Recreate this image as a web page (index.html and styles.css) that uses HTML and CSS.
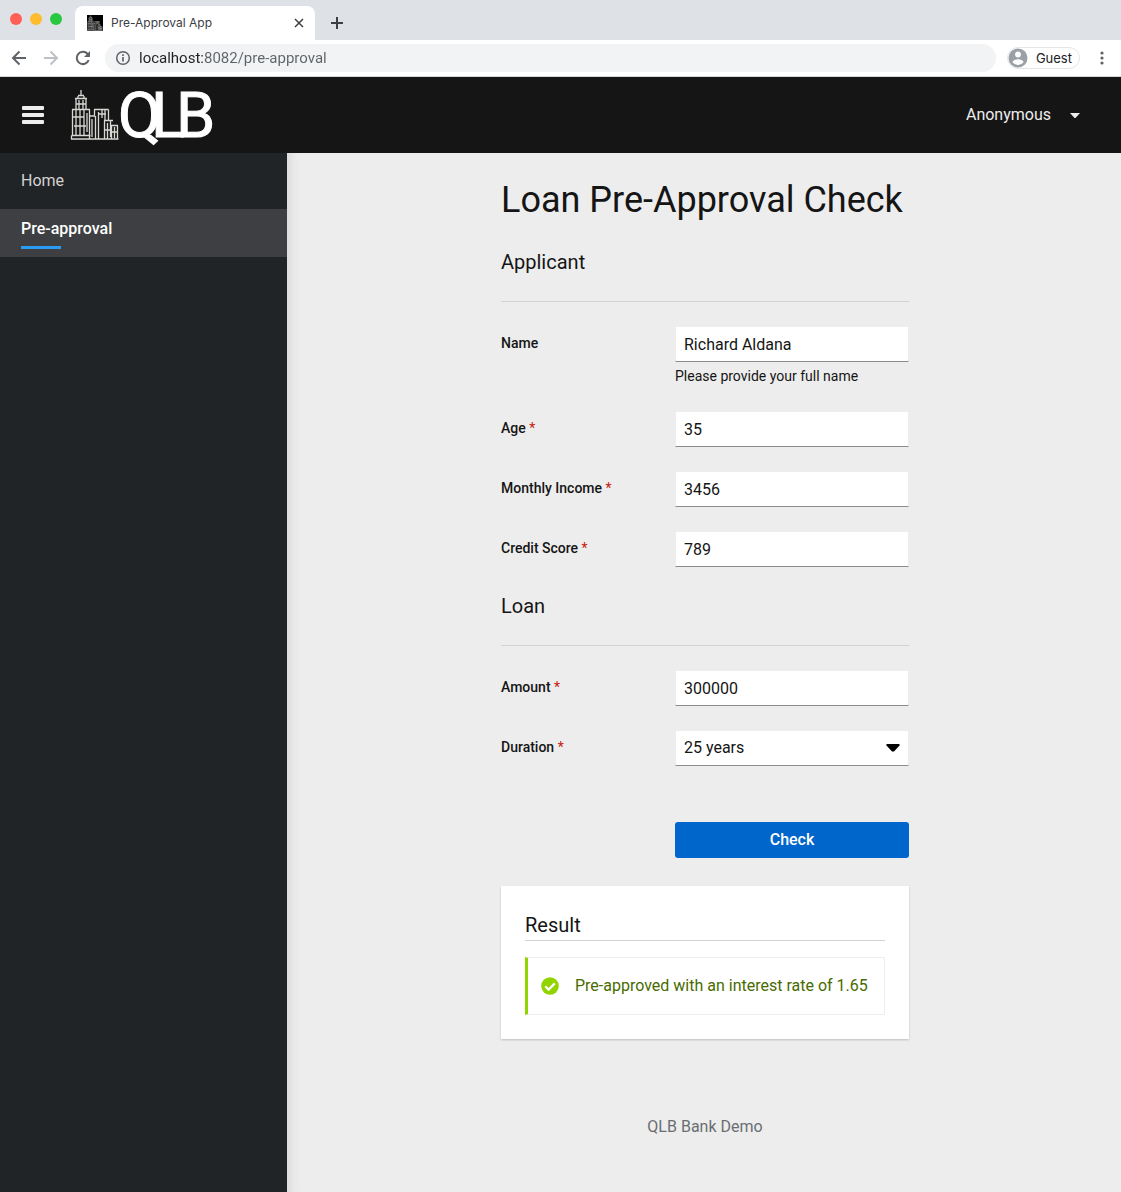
FILE: index.html
```html
<!DOCTYPE html>
<html lang="en">
<head>
<meta charset="utf-8">
<meta name="viewport" content="width=device-width, initial-scale=1">
<title>Pre-Approval App</title>
<link rel="stylesheet" href="styles.css">
</head>
<body>
<svg class="defs" aria-hidden="true">
  <defs>
    <symbol id="skyline" viewBox="70 89 50 51">
      <path d="M81 90v5M78 95.500h6M78 96v2.500M84 96v2.500M75 98.500h12M76 98.500v10.500M86 98.500v10.500M79 100v9M83 100v9M76 104h10M72 109.500h18M72.500 109.500v26M89.500 109.500v29M76 110v25M80 110v25M84 110v25M87 113v19M72 117h12M74 126h12M71.500 135.500h19M71.500 135.500v4M71 139h47.500M90 116h5M95.500 116v23M92 119v18M94 109.500h14.500M94.500 109.500v7M108.500 109.500v11M98.500 112v27M102 110v8M105 110v10M98 114h8M104 120.500h9M104.500 120.500v19M107.500 123v16M110.500 120v17M104 130h6M111 125.500h7M111.500 125.500v14M117.500 125.500v14M114.500 127v11M111 132h6" fill="none" stroke="#d8d8d4" stroke-width="1.300"/>
    </symbol>
  </defs>
</svg>

<div class="browser">
  <div class="tabstrip">
    <div class="lights"><i class="light red"></i><i class="light amber"></i><i class="light green"></i></div>
    <div class="tab">
      <svg class="favicon" width="16" height="16" aria-hidden="true"><use href="#skyline" width="16" height="16"/></svg>
      <span class="tab-title">Pre-Approval App</span>
      <button class="icon-btn" type="button" aria-label="Close tab"><svg width="10" height="10" viewBox="0 0 10 10"><path d="M1 1l8 8M9 1L1 9" stroke="#3c4043" stroke-width="1.500"/></svg></button>
    </div>
    <button class="icon-btn new-tab" type="button" aria-label="New tab"><svg width="14" height="14" viewBox="0 0 14 14"><path d="M7 1v12M1 7h12" stroke="#3c4043" stroke-width="2"/></svg></button>
  </div>
  <div class="toolbar">
    <button class="icon-btn" type="button" aria-label="Back"><svg width="16" height="16" viewBox="0 0 16 16"><path d="M15 8H2.500M8.500 1.500L2 8l6.500 6.500" fill="none" stroke="#5f6368" stroke-width="2"/></svg></button>
    <button class="icon-btn" type="button" aria-label="Forward"><svg width="16" height="16" viewBox="0 0 16 16"><path d="M1 8h12.500M7.500 1.500L14 8l-6.500 6.500" fill="none" stroke="#bdc1c6" stroke-width="2"/></svg></button>
    <button class="icon-btn" type="button" aria-label="Reload"><svg width="16" height="16" viewBox="0 0 16 16"><path d="M13.700 10.200A6.200 6.200 0 1 1 12.500 3.700L14 5.200" fill="none" stroke="#5f6368" stroke-width="2"/><path d="M15 1v6H9z" fill="#5f6368"/></svg></button>
    <div class="address">
      <svg width="16" height="16" viewBox="0 0 16 16" aria-hidden="true"><circle cx="8" cy="8" r="6.300" fill="none" stroke="#5f6368" stroke-width="1.500"/><path d="M8 7v4.500M8 4.300v1.700" stroke="#5f6368" stroke-width="1.700"/></svg>
      <input class="url" type="text" aria-label="Address" value="localhost:8082/pre-approval">
    </div>
    <button class="guest" type="button">
      <svg width="20" height="20" viewBox="0 0 20 20" aria-hidden="true"><circle cx="10" cy="10" r="9.500" fill="#9aa0a6"/><circle cx="10" cy="6.500" r="2.900" fill="#fff"/><path d="M4.500 14.200c0-2 3.600-3 5.500-3s5.500 1 5.500 3a6.800 6.800 0 0 1-11 0z" fill="#fff"/></svg>
      Guest
    </button>
    <button class="icon-btn more" type="button" aria-label="Menu"><svg width="4" height="14" viewBox="0 0 4 14" fill="#5f6368"><circle cx="2" cy="2" r="1.600"/><circle cx="2" cy="7" r="1.600"/><circle cx="2" cy="12" r="1.600"/></svg></button>
  </div>
</div>

<header class="masthead">
  <button class="icon-btn" type="button" aria-label="Toggle navigation"><svg width="22" height="20" viewBox="0 0 22 20" fill="#ededed"><rect y="1" width="22" height="4" rx="1"/><rect y="8" width="22" height="4" rx="1"/><rect y="15" width="22" height="4" rx="1"/></svg></button>
  <a class="brand" href="#" aria-label="QLB home">
    <svg width="150" height="64" viewBox="66 83 150 64">
      <use href="#skyline" x="70" y="89" width="50" height="51"/>
      <text class="wordmark" x="118 151 176" y="137">QLB</text>
    </svg>
  </a>
  <button class="account" type="button">Anonymous <svg width="10" height="5" viewBox="0 0 10 5" aria-hidden="true"><path d="M0 0h10L5.500 5h-1z" fill="#ededed"/></svg></button>
</header>

<div class="page">
  <nav class="sidebar" aria-label="Main">
    <a class="nav-link" href="#">Home</a>
    <a class="nav-link current" href="#" aria-current="page">Pre-approval</a>
  </nav>
  <main class="main">
    <form class="content">
      <h1>Loan Pre-Approval Check</h1>
      <h2>Applicant</h2>
      <hr>
      <div class="field">
        <label for="name">Name</label>
        <div class="control"><input id="name" type="text" value="Richard Aldana" aria-describedby="name-help"><p class="help" id="name-help">Please provide your full name</p></div>
      </div>
      <div class="field">
        <label for="age">Age <span class="req">*</span></label>
        <div class="control"><input id="age" type="text" value="35"></div>
      </div>
      <div class="field">
        <label for="income">Monthly Income <span class="req">*</span></label>
        <div class="control"><input id="income" type="text" value="3456"></div>
      </div>
      <div class="field">
        <label for="score">Credit Score <span class="req">*</span></label>
        <div class="control"><input id="score" type="text" value="789"></div>
      </div>
      <h2>Loan</h2>
      <hr>
      <div class="field">
        <label for="amount">Amount <span class="req">*</span></label>
        <div class="control"><input id="amount" type="text" value="300000"></div>
      </div>
      <div class="field">
        <label for="duration">Duration <span class="req">*</span></label>
        <div class="control"><select id="duration"><option>25 years</option></select></div>
      </div>
      <div class="actions"><button class="primary" type="button">Check</button></div>
      <section class="card">
        <h2>Result</h2>
        <div class="alert" role="status">
          <svg width="18" height="18" viewBox="0 0 18 18" aria-hidden="true"><circle cx="9" cy="9" r="8.800" fill="#92d400"/><path d="M4.300 9.300l3.300 3.300 6.200-6.200" fill="none" stroke="#fff" stroke-width="2.300"/></svg>
          <span>Pre-approved with an interest rate of 1.65</span>
        </div>
      </section>
      <footer>QLB Bank Demo</footer>
    </form>
  </main>
</div>
</body>
</html>
```
FILE: styles.css
```css
* { box-sizing: border-box; }

body {
  margin: 0;
  min-height: 100vh;
  display: flex;
  flex-direction: column;
  background: #ededed;
  color: #151515;
  font: 16px/24px Roboto, sans-serif;
}

button, input, select { font: inherit; color: inherit; }
h1, h2, p { margin: 0; font-weight: 400; }
svg { display: block; flex: none; }
.defs { position: absolute; width: 0; height: 0; }

.icon-btn {
  display: flex;
  flex: none;
  padding: 0;
  border: 0;
  background: none;
}

/* Browser window */
.browser { border-bottom: 1px solid #d5d8dc; background: #fff; }
.tabstrip {
  display: flex;
  align-items: flex-end;
  height: 40px;
  background: #dee1e6;
}
.lights { display: flex; gap: 8px; width: 75px; padding: 0 0 15px 10px; }
.light { width: 12px; height: 12px; border-radius: 50%; }
.red { background: #ff5f57; }
.amber { background: #febc2e; }
.green { background: #28c840; }
.tab {
  display: flex;
  align-items: center;
  gap: 8px;
  width: 240px;
  height: 34px;
  padding: 0 11px 0 12px;
  border-radius: 8px 8px 0 0;
  background: #fff;
}
.favicon { background: #000; }
.tab-title { flex: 1; color: #3c4043; font: 12px/16px Inter, sans-serif; }
.new-tab { padding: 0 15px 10px; }
.toolbar {
  display: flex;
  align-items: center;
  gap: 16px;
  height: 36px;
  padding: 0 17px 0 11px;
}
.address {
  display: flex;
  flex: 1;
  align-items: center;
  gap: 8px;
  height: 28px;
  margin-left: -2px;
  padding: 0 10px;
  border-radius: 14px;
  background: #f1f3f4;
}
.url {
  flex: 1;
  min-width: 0;
  padding: 0;
  border: 0;
  background: linear-gradient(90deg, #202124 65px, #5f6368 65px) text;
  -webkit-text-fill-color: transparent;
  font: 15px/20px Roboto, sans-serif;
}
.guest {
  display: flex;
  align-items: center;
  gap: 8px;
  height: 22px;
  margin-left: -5px;
  padding: 0 7px 0 0;
  border: 1px solid #e3e5e8;
  border-radius: 11px;
  background: #fff;
  color: #202124;
  font: 13px/20px Inter, sans-serif;
}
.more { padding-left: 4px; }

/* Application header */
.masthead {
  display: flex;
  align-items: center;
  gap: 22px;
  height: 76px;
  padding: 0 41px 0 22px;
  background: #151515;
  color: #ededed;
}
.brand svg { overflow: visible; }
.wordmark {
  fill: #fff;
  stroke: #fff;
  stroke-width: 1px;
  font: 63px Roboto, sans-serif;
}
.account {
  display: flex;
  align-items: center;
  gap: 19px;
  margin-left: auto;
  padding: 0;
  border: 0;
  background: none;
}

.page { display: flex; flex: 1; }
.sidebar {
  flex: none;
  width: 287px;
  padding-top: 8px;
  background: #212427;
}
.nav-link {
  display: block;
  position: relative;
  padding: 8px 21px 16px;
  color: #d2d2d2;
  text-decoration: none;
}
.current { background: #3e3f42; color: #fff; font-weight: 500; }
.current::after {
  content: "";
  position: absolute;
  left: 21px;
  bottom: 8px;
  width: 40px;
  height: 3px;
  background: #2b9af3;
}

/* Form */
.main {
  flex: 1;
  padding: 24px 24px 24px 26px;
  box-shadow: inset 12px 0 12px -10px #d2d2d2;
}
.content {
  display: flex;
  flex-direction: column;
  gap: 24px;
  max-width: 408px;
  margin: 0 auto;
}
h1 { font-size: 36px; line-height: 46px; white-space: nowrap; }
h2 { font-size: 20px; line-height: 30px; }
hr { width: 100%; height: 1px; margin: 0; border: 0; background: #d2d2d2; }
.field { display: grid; grid-template-columns: 174px 1fr; align-items: start; }
label { padding-top: 7px; font-size: 14px; line-height: 21px; font-weight: 500; }
.req { color: #c9190b; font-weight: 400; }
.control input, .control select {
  display: block;
  width: 100%;
  height: 36px;
  padding: 0 8px;
  border: 1px solid #ededed;
  border-bottom-color: #8a8d90;
  border-radius: 0;
  background: #fff;
}
.control select {
  appearance: none;
  background: #fff url("data:image/svg+xml,%3Csvg xmlns='http://www.w3.org/2000/svg' width='14' height='8'%3E%3Cpath d='M1 0h12l1 1-6 6.500H6L0 1z'/%3E%3C/svg%3E") no-repeat right 8px center;
}
.help { padding-top: 4px; font-size: 14px; line-height: 21px; }
.actions { margin-top: 32px; padding-left: 174px; }
.primary {
  display: block;
  width: 100%;
  height: 36px;
  border: 0;
  border-radius: 3px;
  background: #06c;
  color: #fff;
  font-weight: 500;
}
.card {
  margin-top: 4px;
  padding: 24px;
  background: #fff;
  box-shadow: 0 1px 2px #00000033;
}
.card h2 { border-bottom: 1px solid #d2d2d2; }
.alert {
  display: flex;
  align-items: center;
  gap: 16px;
  height: 58px;
  margin-top: 16px;
  padding: 0 12px 0 13px;
  border: 1px solid #ededed;
  border-left: 3px solid #92d400;
  color: #486b00;
  white-space: nowrap;
}
footer { padding-top: 52px; color: #6a6e73; text-align: center; }
```
